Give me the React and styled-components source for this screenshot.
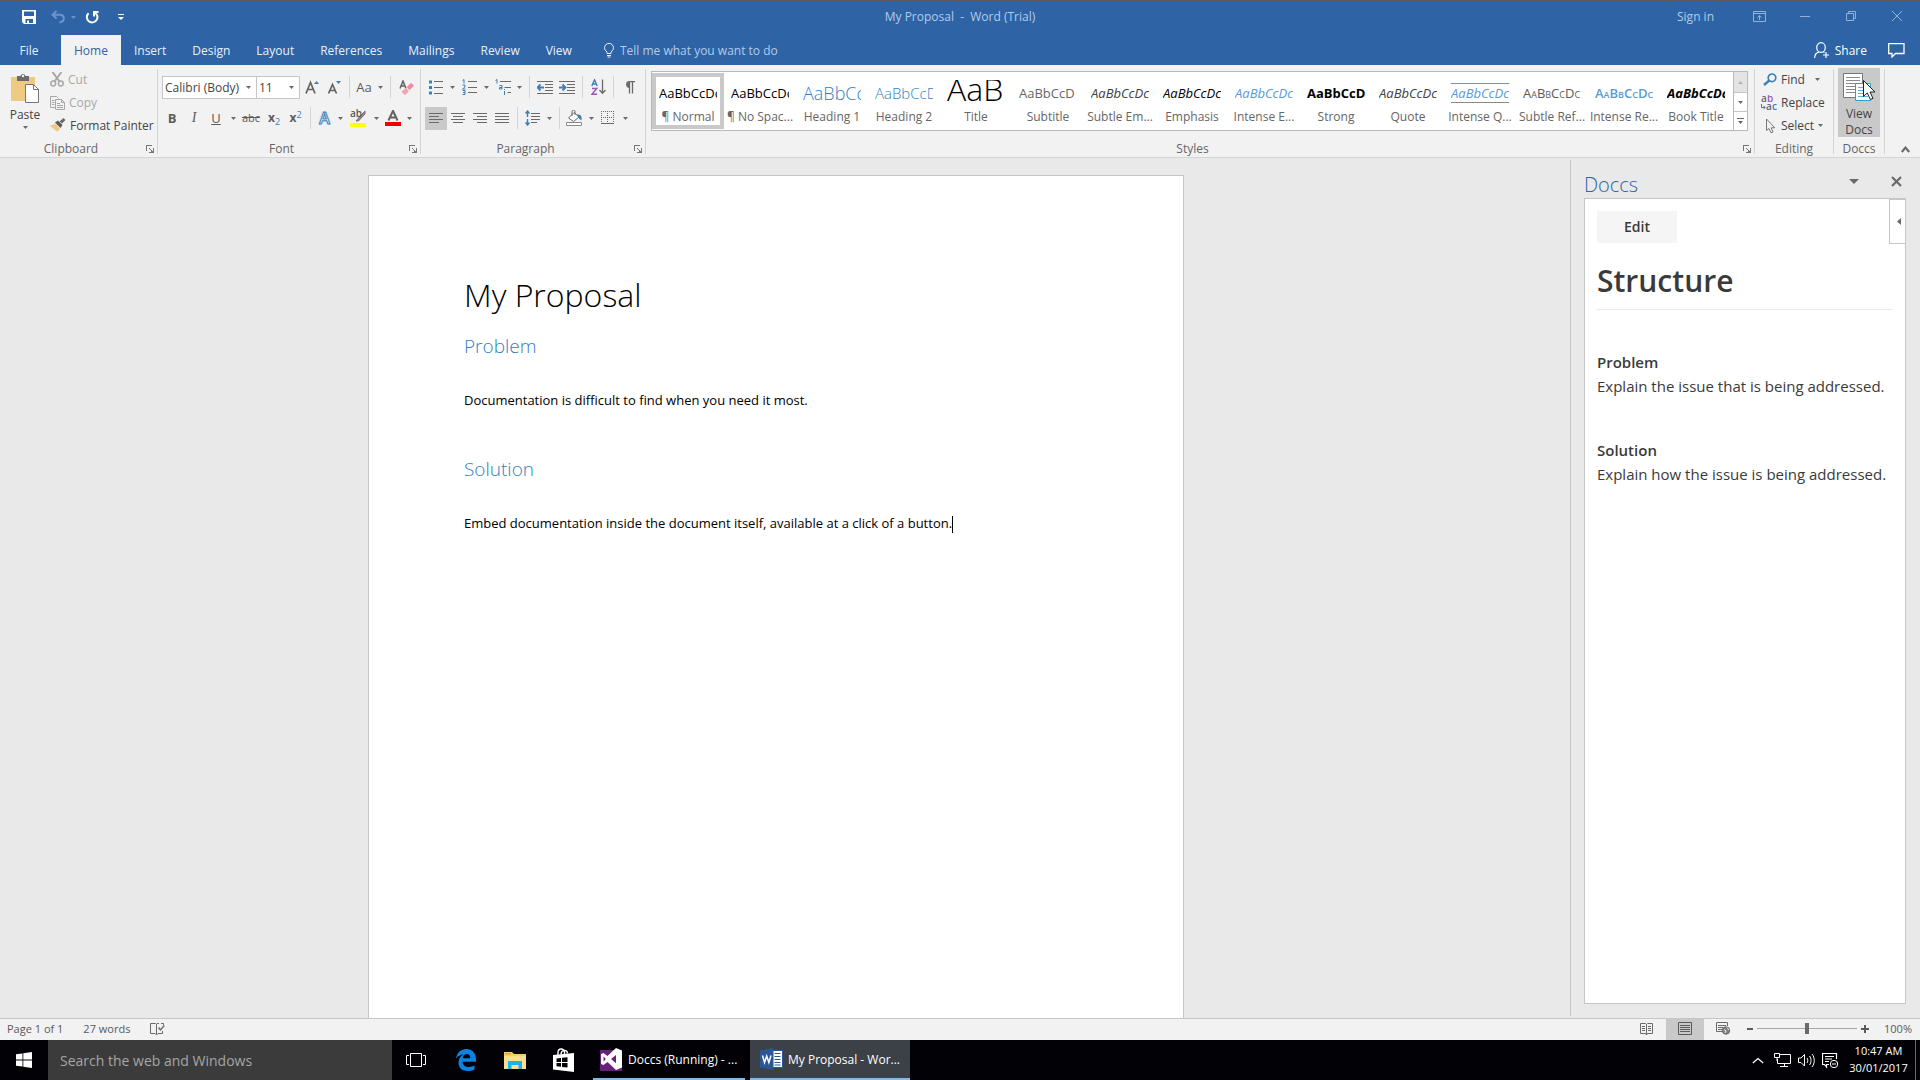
import styled, { createGlobalStyle, css } from 'styled-components';

const colors = {
  word: '#2e63a6',
  ribbon: '#f2f2f2',
  canvas: '#e9e9e9',
  line: '#d4d4d4',
  frame: '#c6c6c6',
  text: '#444444',
  muted: '#666666',
  disabled: '#a8a8a8',
  icon: '#6a6a6a',
  accent: '#3f7fb8',
  heading: '#2f7fc3',
  light: '#5b9bd5',
  titleText: '#b4cbe8',
  active: '#c9c9c9',
};

const ui = "'Open Sans', 'Noto Sans', sans-serif";

const GlobalStyle = createGlobalStyle`
  * {
    box-sizing: border-box;
  }

  body {
    margin: 0;
    font-family: ${ui};
    font-size: 12px;
    color: ${colors.text};
  }

  button, input, select {
    font: inherit;
    color: inherit;
    margin: 0;
    padding: 0;
    border: 0;
    background: none;
    border-radius: 0;
  }

  h1, h2, h3, p {
    margin: 0;
  }

  svg {
    display: block;
    flex: none;
  }
`;

const Window = styled.div`
  display: flex;
  flex-direction: column;
  height: 100vh;
  min-height: 600px;
  overflow: hidden;
  background: ${colors.canvas};
`;

/* ---------- title bar and tabs ---------- */

const TitleBar = styled.header`
  display: grid;
  grid-template-columns: 1fr auto 1fr;
  align-items: center;
  height: 35px;
  flex: none;
  border-top: 1px solid #5d5d5d;
  background: ${colors.word};
  color: ${colors.titleText};
  padding-bottom: 2px;
`;

const QuickAccess = styled.div`
  display: flex;
  align-items: center;
  padding-left: 14px;
`;

const QuickButton = styled.button`
  display: flex;
  align-items: center;
  justify-content: center;
  width: ${(p) => p.$w || 26}px;
  height: 26px;
`;

const WindowTitle = styled.h1`
  font-size: 12px;
  font-weight: 400;
  white-space: pre;
  padding-bottom: 2px;
`;

const WindowControls = styled.div`
  display: flex;
  align-items: center;
  justify-content: flex-end;
  padding-bottom: 2px;
`;

const SignIn = styled.button`
  padding: 0 22px;
`;

const WindowButton = styled.button`
  display: flex;
  align-items: center;
  justify-content: center;
  width: 46px;
  height: 28px;
  opacity: 0.75;
`;

const TabBar = styled.nav`
  display: flex;
  align-items: stretch;
  height: 30px;
  flex: none;
  background: ${colors.word};
  color: #e8effa;
`;

const Tab = styled.button`
  padding: 0 13px;
  ${(p) =>
    p.$active &&
    css`
      background: ${colors.ribbon};
      color: ${colors.word};
    `}
`;

const FileTab = styled(Tab)`
  width: 58px;
  margin-right: 3px;
`;

const TellMe = styled.label`
  display: flex;
  align-items: center;
  gap: 6px;
  flex: 1;
  margin-left: 19px;

  input {
    flex: 1;
    min-width: 0;
    outline: 0;
  }

  input::placeholder {
    color: ${colors.titleText};
    opacity: 1;
  }
`;

const TabAction = styled.button`
  display: flex;
  align-items: center;
  gap: 5px;
  padding: 0 15px 0 6px;
  color: #ffffff;
`;

/* ---------- ribbon ---------- */

const Ribbon = styled.section`
  display: flex;
  height: 93px;
  flex: none;
  background: ${colors.ribbon};
  border-bottom: 1px solid ${colors.line};
  padding: 4px 0 3px;
`;

const Group = styled.div`
  display: flex;
  flex-direction: column;
  justify-content: space-between;
  min-width: 0;
  flex: ${(p) => (p.$grow ? '1 1 0' : 'none')};
  width: ${(p) => (p.$w ? `${p.$w}px` : 'auto')};
  border-right: 1px solid ${colors.line};
`;

const GroupFooter = styled.div`
  display: flex;
  align-items: center;
  height: 14px;
  margin-bottom: -2px;
  color: ${colors.muted};
`;

const GroupName = styled.span`
  flex: 1;
  text-align: center;
  line-height: 14px;
`;

const Launcher = styled.button`
  display: flex;
  justify-content: flex-end;
  width: 12px;
  margin-right: 3px;
`;

const ClipboardTools = styled.div`
  display: flex;
`;

const PasteButton = styled.button`
  display: flex;
  flex-direction: column;
  align-items: center;
  width: 50px;
  height: 64px;
  padding-top: 4px;
  gap: 3px;
  line-height: 16px;
`;

const Stack = styled.div`
  display: flex;
  flex-direction: column;
  margin-top: -1px;
`;

const LineButton = styled.button`
  display: flex;
  align-items: center;
  gap: 4px;
  height: 23px;
  padding-left: ${(p) => p.$pad || 0}px;
  color: ${(p) => (p.$off ? colors.disabled : colors.text)};
  white-space: nowrap;
`;

const ToolRows = styled.div`
  display: flex;
  flex-direction: column;
  gap: 7px;
  padding: 6px 0 0 ${(p) => p.$left || 4}px;
`;

const ToolRow = styled.div`
  display: flex;
  align-items: center;
  height: 24px;
`;

const ToolButton = styled.button`
  display: flex;
  align-items: center;
  width: ${(p) => p.$w || 22}px;
  height: 23px;
  color: #5c5c5c;
  background: ${(p) => (p.$active ? colors.active : 'transparent')};
`;

const ToolFace = styled.span`
  display: flex;
  flex: 1;
  justify-content: center;
  white-space: nowrap;
`;

const CaretBox = styled.span`
  display: flex;
  justify-content: center;
  width: ${(p) => p.$w || 12}px;
`;

const Divider = styled.span`
  width: 1px;
  height: 22px;
  margin: 0 4px;
  background: ${colors.line};
`;

const Glyph = styled.span`
  font-size: ${(p) => p.$size || 14}px;
  line-height: 16px;
  font-weight: ${(p) => (p.$bold ? 700 : 400)};
  font-style: ${(p) => (p.$italic ? 'italic' : 'normal')};
  font-family: ${(p) => (p.$serif ? "'Liberation Serif', serif" : ui)};
  text-decoration: ${(p) => p.$line || 'none'};
`;

const Script = styled.span`
  align-self: ${(p) => (p.$up ? 'flex-start' : 'flex-end')};
  font-size: 9px;
  line-height: 9px;
  color: ${colors.accent};
`;

const OutlineLetter = styled.span`
  font-size: 16px;
  line-height: 18px;
  font-weight: 600;
  color: #ffffff;
  -webkit-text-stroke: 1px ${colors.accent};
  text-shadow: 0 0 3px #a9cdee;
`;

const Field = styled.label`
  position: relative;
  width: ${(p) => p.$w}px;
  height: 23px;
  margin: ${(p) => p.$margin};
  border: 1px solid ${colors.frame};
  background: #ffffff;

  select {
    width: 100%;
    height: 21px;
    padding-left: 2px;
    appearance: none;
    outline: 0;
  }

  svg {
    position: absolute;
    right: 5px;
    top: 9px;
    pointer-events: none;
  }
`;

const Gallery = styled.div`
  display: flex;
  height: 60px;
  margin: 2px 6px 0 5px;
  border: 1px solid #b5babd;
  background: #ffffff;
`;

const GalleryItems = styled.div`
  display: flex;
  flex: 1;
  min-width: 0;
  overflow: hidden;
`;

const StyleCard = styled.button`
  display: flex;
  flex-direction: column;
  align-items: stretch;
  flex: none;
  width: 72px;
  height: 56px;
  margin-top: 1px;
  padding: 3px 3px 0;
  border: 4px solid ${(p) => (p.$active ? colors.active : 'transparent')};
  line-height: 16px;
`;

const Preview = styled.span`
  display: flex;
  align-items: center;
  flex: none;
  height: 26px;
  padding-bottom: ${(p) => p.$lift || 0}px;
  overflow: hidden;
  white-space: nowrap;
  text-align: left;
  font-size: ${(p) => p.$size || 13}px;
  line-height: 20px;
  color: ${(p) => p.$color || '#000000'};
  font-weight: ${(p) => p.$weight || 400};
  font-style: ${(p) => (p.$italic ? 'italic' : 'normal')};
  font-variant: ${(p) => (p.$caps ? 'small-caps' : 'normal')};
`;

const QuoteRule = styled.span`
  border-top: 1px solid ${colors.light};
  border-bottom: 1px solid #8a8a8a;
  line-height: 18px;
`;

const StyleName = styled.span`
  display: flex;
  justify-content: center;
  margin: 3px -3px 0;
  color: ${colors.muted};
  white-space: nowrap;
`;

const GalleryScroll = styled.div`
  display: grid;
  grid-template-rows: 21px 19px 1fr;
  width: 14px;
  border-left: 1px solid #b5babd;
`;

const ScrollButton = styled.button`
  display: flex;
  align-items: center;
  justify-content: center;
  border-bottom: ${(p) => (p.$last ? '0' : `1px solid ${colors.frame}`)};
  background: ${(p) => (p.$off ? '#e4e4e4' : '#ffffff')};
`;

const ViewDocs = styled.button`
  display: flex;
  flex-direction: column;
  align-items: center;
  gap: 3px;
  width: 42px;
  height: 69px;
  margin: -1px auto 0;
  padding-top: 5px;
  line-height: 16px;
  background: ${colors.active};
`;

const CollapseRibbon = styled.button`
  display: flex;
  align-items: flex-end;
  justify-content: center;
  flex: none;
  width: 35px;
  padding: 0 0 1px 5px;
`;

/* ---------- document and side pane ---------- */

const Workspace = styled.div`
  display: flex;
  flex: 1;
  min-height: 0;
`;

const Canvas = styled.main`
  display: flex;
  justify-content: center;
  flex: 1;
  min-width: 0;
  overflow: hidden;
  padding: 17px 18px 0 0;
`;

const Page = styled.article`
  width: 816px;
  border: 1px solid ${colors.frame};
  border-bottom: 0;
  background: #ffffff;
  padding: 95px;
  color: #000000;
`;

const DocTitle = styled.h1`
  font-size: 32px;
  line-height: 48px;
  font-weight: 300;
`;

const DocHeading = styled.h2`
  font-size: 19px;
  line-height: 24px;
  font-weight: 300;
  color: ${colors.heading};
  margin: ${(p) => (p.$first ? 15 : 45)}px 0 30px;
`;

const DocText = styled.p`
  font-size: 13px;
  line-height: 24px;
`;

const TextCursor = styled.span`
  display: inline-block;
  width: 1px;
  height: 17px;
  vertical-align: middle;
  background: #000000;
`;

const Pane = styled.aside`
  display: flex;
  flex-direction: column;
  width: 350px;
  flex: none;
  margin: 2px 0;
  padding: 14px 14px 12px 13px;
  border-left: 1px solid ${colors.frame};
`;

const PaneHeader = styled.div`
  display: flex;
  align-items: center;
  height: 24px;
  padding-bottom: 2px;
`;

const PaneTitle = styled.h2`
  flex: 1;
  font-size: 20px;
  line-height: 22px;
  font-weight: 300;
  color: ${colors.word};
`;

const PaneButton = styled.button`
  display: flex;
  align-items: center;
  justify-content: center;
  width: 42px;
  height: 20px;
  margin: -8px -11px 0 11px;
`;

const PaneBody = styled.div`
  position: relative;
  flex: 1;
  padding: 12px;
  border: 1px solid ${colors.frame};
  background: #ffffff;
  color: #3a3a3a;
`;

const PaneHandle = styled.button`
  position: absolute;
  top: 0;
  right: -1px;
  display: flex;
  align-items: center;
  justify-content: center;
  width: 17px;
  height: 45px;
  padding-left: 3px;
  border: 1px solid ${colors.frame};
  background: #ffffff;
`;

const EditButton = styled.button`
  display: block;
  width: 80px;
  height: 32px;
  padding-bottom: 2px;
  background: #f5f5f5;
  font-size: 14px;
  font-weight: 600;
`;

const PaneHeading = styled.h2`
  font-size: 30px;
  line-height: 40px;
  font-weight: 600;
  margin-top: 18px;
  padding-bottom: 8px;
  border-bottom: 1px solid #eaeaea;
`;

const Hint = styled.section`
  margin-top: 40px;
  font-size: 15px;
  line-height: 24px;

  h3 {
    font-size: 15px;
    font-weight: 600;
  }
`;

/* ---------- status bar ---------- */

const StatusBar = styled.footer`
  display: flex;
  align-items: center;
  height: 22px;
  flex: none;
  border-top: 1px solid ${colors.frame};
  background: ${colors.ribbon};
  color: #5a5a5a;
  font-size: 11px;
  padding: 0 8px 2px 7px;
`;

const StatusText = styled.span`
  margin-right: 20px;
  line-height: 18px;
`;

const StatusSpacer = styled.span`
  flex: 1;
`;

const ViewButton = styled.button`
  display: flex;
  align-items: center;
  justify-content: center;
  width: 38px;
  height: 21px;
  margin-bottom: -2px;
  padding-bottom: 2px;
  background: ${(p) => (p.$active ? colors.active : 'transparent')};
`;

const ZoomButton = styled.button`
  display: flex;
  align-items: center;
  justify-content: center;
  width: ${(p) => p.$w}px;
  height: 18px;
`;

const ZoomSlider = styled.input`
  width: 100px;
  height: 12px;
  appearance: none;
  outline: 0;

  &::-webkit-slider-runnable-track {
    height: 1px;
    background: #a6a6a6;
  }

  &::-webkit-slider-thumb {
    appearance: none;
    width: 4px;
    height: 11px;
    margin-top: -5px;
    background: ${colors.icon};
  }
`;

const ZoomLevel = styled.button`
  width: 39px;
  text-align: right;
`;

/* ---------- taskbar ---------- */

const Taskbar = styled.footer`
  display: flex;
  align-items: stretch;
  height: 40px;
  flex: none;
  background: #020206;
  color: #ffffff;
`;

const TaskButton = styled.button`
  display: flex;
  align-items: center;
  justify-content: center;
  width: ${(p) => p.$w || 49}px;
`;

const TaskSearch = styled.input`
  width: 344px;
  padding: 0 12px;
  background: #3b3b3b;
  font-size: 14px;
  outline: 0;

  &::placeholder {
    color: #a6a6a6;
    opacity: 1;
  }
`;

const RunningApp = styled.button`
  display: flex;
  align-items: center;
  gap: 5px;
  width: ${(p) => p.$w}px;
  margin-left: 5px;
  padding-left: ${(p) => p.$pad}px;
  border-bottom: 2px solid #82b8e6;
  background: ${(p) => (p.$active ? '#3c4147' : 'transparent')};
  white-space: nowrap;
`;

const Tray = styled.div`
  display: flex;
  align-items: center;
  margin-left: auto;
`;

const TrayButton = styled.button`
  display: flex;
  justify-content: center;
  width: 24px;
`;

const Clock = styled.time`
  display: flex;
  flex-direction: column;
  align-items: center;
  width: 73px;
  padding-bottom: 2px;
  font-size: 11px;
  line-height: 17px;
`;

const ShowDesktop = styled.button`
  align-self: stretch;
  width: 5px;
  border-left: 1px solid #6a6a6a;
`;

/* ---------- icons ---------- */

function Icon({ w = 16, h = w, children, ...rest }) {
  return (
    <svg width={w} height={h} viewBox={`0 0 ${w} ${h}`} fill="none" aria-hidden="true" {...rest}>
      {children}
    </svg>
  );
}

const Caret = ({ color = '#6a6a6a', w = 5 }) => (
  <Icon w={w} h={3}>
    <path d={`M0 0H${w}L${w / 2} 3Z`} fill={color} />
  </Icon>
);

const LauncherIcon = () => (
  <Icon w={8} h={8} shapeRendering="crispEdges">
    <path d="M0.5 6V0.5H6" stroke="#777" />
    <path d="M3 3l3 3" stroke="#777" />
    <path d="M7.5 3v5M3 7.5h5M5 6h3" stroke="#777" />
  </Icon>
);

const SaveIcon = () => (
  <Icon w={14} h={14}>
    <path d="M0 0H14V14H2L0 12Z" fill="#fff" />
    <path d="M2 1.5H12V6H2Z" fill={colors.word} />
    <path d="M3.5 9H11V13H3.5Z" fill={colors.word} />
    <path d="M5 10.5H7V13H5Z" fill="#fff" />
  </Icon>
);

const UndoIcon = () => (
  <Icon w={14} h={14}>
    <path d="M5.5 1L1.5 4.8L5.5 8.6M1.5 4.8H8.5C14 4.8 14.500 11.500 8.500 12.500" stroke="#6d94c8" strokeWidth="2" />
  </Icon>
);

const RedoIcon = () => (
  <Icon w={14} h={14}>
    <path d="M9 2.200A5.300 5.300 0 1 1 3.600 3.200" stroke="#fff" strokeWidth="2" />
    <path d="M0.500 1H6V6.500H4V3H0.500Z" fill="#fff" transform="translate(14 0) scale(-1 1)" />
  </Icon>
);

const CustomizeIcon = () => (
  <Icon w={6} h={6}>
    <path d="M0 0.5H6" stroke="#fff" />
    <path d="M0 3H6L3 6Z" fill="#fff" />
  </Icon>
);

const RibbonOptionsIcon = () => (
  <Icon w={13} h={11} stroke={colors.titleText}>
    <path d="M0.5 0.5H12.500V10.500H0.500ZM0.500 2.500H12.500M6.500 9V4.500M4.500 6.500L6.500 4.500L8.500 6.500" />
  </Icon>
);

const MinimizeIcon = () => (
  <Icon w={10} h={10} stroke={colors.titleText}>
    <path d="M0 5.5H10" />
  </Icon>
);

const RestoreIcon = () => (
  <Icon w={10} h={10} stroke={colors.titleText}>
    <path d="M0.5 2.500H7.500V9.500H0.500ZM2.500 2.500V0.500H9.500V7.500H7.500" />
  </Icon>
);

const CloseIcon = () => (
  <Icon w={10} h={10} stroke={colors.titleText}>
    <path d="M0 0L10 10M10 0L0 10" />
  </Icon>
);

const BulbIcon = () => (
  <Icon w={10} h={15} stroke="#e8effa">
    <path d="M3 10.500V9C1.500 7.500 0.500 6.500 0.500 4.800A4.400 4.300 0 0 1 9.500 4.800C9.500 6.500 8.500 7.500 7 9V10.500ZM3 12.500H7M3.500 14H6.500" />
  </Icon>
);

const PersonIcon = () => (
  <Icon w={16} h={17} stroke="#fff" strokeWidth="1.2">
    <ellipse cx="7" cy="5.500" rx="4.300" ry="4.800" />
    <path d="M0.600 16C0.800 12.500 2.500 10.500 5 9.800M9 9.800L10.500 10.500M12 10V16M9 13H15" />
  </Icon>
);

const CommentIcon = () => (
  <Icon w={17} h={15} stroke="#fff" strokeWidth="1.3">
    <path d="M0.700 0.700H16V10.500H7.500L4 14V10.500H0.700Z" />
  </Icon>
);

const PasteIcon = () => (
  <Icon w={30} h={31}>
    <path d="M1 4H25V28H1Z" fill="#efca83" />
    <path d="M7 3H10.500A2.600 2.600 0 0 1 15.500 3H19V8H7Z" fill="#6b6b6b" />
    <circle cx="13" cy="3" r="1.200" fill="#f2f2f2" />
    <path d="M15.500 11.500H23.500L28.500 16.500V29.500H15.500Z" fill="#fff" stroke="#777" />
    <path d="M23.500 11.500V16.500H28.500" stroke="#777" />
  </Icon>
);

const CutIcon = () => (
  <Icon w={14} h={15} stroke="#a8a8a8" strokeWidth="1.500">
    <path d="M2.500 0L9.500 9.500M11.500 0L4.500 9.500" strokeWidth="2" />
    <circle cx="3.200" cy="11.500" r="2.400" />
    <circle cx="10.800" cy="11.500" r="2.400" />
  </Icon>
);

const CopyIcon = () => (
  <Icon w={15} h={14} stroke="#a8a8a8">
    <path d="M5 11.500H0.500V0.500H6.500L8.500 2.500M2 4.500H4.500M2 6.500H4.500M2 8.500H4.500" />
    <path d="M5.500 3.500H11.500L14.500 6.500V13.500H5.500ZM11.500 3.500V6.500H14.500M7 7.500H10M7 9.500H13M7 11.500H13" />
  </Icon>
);

const PainterIcon = () => (
  <Icon w={16} h={15}>
    <path d="M0 8L5.500 5.500L10 10.500L7.500 14Z" fill="#efca83" />
    <path d="M5 4.500L8 2.500L12.500 7L10.500 10Z" fill="#5a5a5a" />
    <path d="M9.500 3.500L13.500 0L15.500 2L12 5.500Z" fill="#6b6b6b" />
  </Icon>
);

const GrowFontIcon = ({ shrink }) => (
  <Icon w={14} h={15}>
    <path
      d={shrink ? 'M1.500 13.500L5.500 4.500L9.500 13.500M3 10.500H8' : 'M1 13.500L5.500 2.500L10 13.500M2.800 9.500H8.400'}
      stroke="#636363"
      strokeWidth="1.700"
    />
    <path d={shrink ? 'M9 1H14L11.500 4Z' : 'M9 4H14L11.500 1Z'} fill={colors.accent} />
  </Icon>
);

const EraserIcon = () => (
  <Icon w={15} h={15}>
    <path d="M1 8.500L4 1L7 8.500M2 6H6" stroke="#636363" strokeWidth="1.500" />
    <path d="M7.800 7L12 2.800L15 5.800L10.500 10.300Z" fill="#ec8da0" />
    <path d="M7 7.800L9.800 11.200L7 14.500H5L2.500 11.800Z" fill="#f1a5b3" />
  </Icon>
);

const HighlightIcon = () => (
  <Icon w={16} h={18}>
    <path d="M15 2L8.500 9L6 12H8.500L15 5Z" fill="#8a8a8a" stroke="#777" />
    <text x="0" y="8" fontSize="10" fontWeight="600" fill="#555" fontFamily="Open Sans">ab</text>
    <path d="M0 14H16V18H0Z" fill="#ffff00" />
  </Icon>
);

const FontColorIcon = () => (
  <Icon w={16} h={16}>
    <path d="M3.500 10.500L8 0.800L12.500 10.500M5.300 7.500H10.700" stroke="#636363" strokeWidth="2" />
    <path d="M0 12H16V16H0Z" fill="#ee0000" />
  </Icon>
);

const BulletsIcon = () => (
  <Icon w={14} h={15}>
    <path d="M0 0.500H3V3.500H0ZM0 6H3V9H0ZM0 11.500H3V14.500H0Z" fill={colors.accent} />
    <path d="M5 1.500H14M5 7.500H14M5 13.500H14" stroke="#6a6a6a" />
  </Icon>
);

const NumberingIcon = () => (
  <Icon w={15} h={16}>
    <path d="M0.500 1.500L2 0.500V4.500M0.500 6H3V8L0.500 10H3.500M0.500 11.500H3V15.500H0.500M1 13.500H3" stroke={colors.accent} />
    <path d="M6 2.500H15M6 8.500H15M6 13.500H15" stroke="#6a6a6a" />
  </Icon>
);

const MultilevelIcon = () => (
  <Icon w={16} h={16}>
    <path d="M0.500 1.500L2 0.500V4.500M4.500 6.500H7V10H4.500V8.500H7M9.500 10V11M9.500 12V16" stroke={colors.accent} />
    <path d="M5 2.500H16M9.500 8.500H16M12.500 13.500H16" stroke="#6a6a6a" />
  </Icon>
);

const IndentIcon = ({ right }) => (
  <Icon w={16} h={13}>
    <path d="M0 0.500H16M8 3.500H16M8 6.500H16M8 9.500H16M0 12.500H16" stroke="#6a6a6a" />
    <path
      d={right ? 'M0 6.500H6M3.500 3.500L6.500 6.500L3.500 9.500' : 'M7 6.500H1M3.500 3.500L0.500 6.500L3.500 9.500'}
      stroke={colors.accent}
      strokeWidth="1.800"
    />
  </Icon>
);

const SortIcon = () => (
  <Icon w={15} h={16}>
    <path d="M0.800 7L3.500 0.800L6.200 7M1.500 5H5.500" stroke={colors.accent} strokeWidth="1.400" />
    <path d="M1 9.500H5.800L1 15.200H6.200" stroke="#9b59b6" strokeWidth="1.400" />
    <path d="M11.500 0.500V14M8.500 11L11.500 14.300L14.500 11" stroke="#6a6a6a" strokeWidth="1.300" />
  </Icon>
);

const PilcrowIcon = () => (
  <Icon w={11} h={13}>
    <path d="M5 0.500H11M5.500 0.500V12.500M8.500 0.500V12.500" stroke="#6a6a6a" strokeWidth="1.300" />
    <path d="M5.500 0A3.300 3.300 0 0 0 5.500 6.800Z" fill="#6a6a6a" />
  </Icon>
);

const alignments = {
  left: 'M0 0.500H14M0 3.500H10M0 6.500H14M0 9.500H10',
  center: 'M0 0.500H14M2 3.500H12M0 6.500H14M2 9.500H12',
  right: 'M0 0.500H14M4 3.500H14M0 6.500H14M4 9.500H14',
  justify: 'M0 0.500H14M0 3.500H14M0 6.500H14M0 9.500H14',
};

const AlignIcon = ({ side }) => (
  <Icon w={14} h={10}>
    <path d={alignments[side]} stroke="#6a6a6a" />
  </Icon>
);

const SpacingIcon = () => (
  <Icon w={15} h={16}>
    <path d="M2.500 1V7M2.500 9V15M0.500 3.500L2.500 1L4.500 3.500M0.500 12.500L2.500 15L4.500 12.500" stroke={colors.accent} strokeWidth="1.400" />
    <path d="M6 3.500H15M6 6.500H15M6 9.500H15M6 12.500H12" stroke="#6a6a6a" />
  </Icon>
);

const BucketIcon = () => (
  <Icon w={17} h={16}>
    <path d="M2.500 8L8 2.500L13 7L7.500 11.500Z" fill="#fff" stroke="#6a6a6a" />
    <path d="M6 6V1.500A1.500 1.500 0 0 1 9 1.500V5" stroke="#6a6a6a" />
    <path d="M11 4.500C15 4.500 16 6 15.500 10.500L12.500 8Z" fill={colors.accent} />
    <path d="M0.500 12.500H15.500V15.500H0.500Z" fill="#fff" stroke="#8a8a8a" />
  </Icon>
);

const BordersIcon = () => (
  <Icon w={14} h={14} stroke="#6a6a6a">
    <path d="M0 0.500H13M0 6.500H13M0.500 0V12M6.500 0V12M12.500 0V12" strokeDasharray="1 1" />
    <path d="M0 12.500H13" />
  </Icon>
);

const FindIcon = () => (
  <Icon w={14} h={13}>
    <circle cx="9" cy="4.800" r="3.800" stroke={colors.accent} strokeWidth="1.700" />
    <path d="M6.300 7.500L1 12" stroke={colors.accent} strokeWidth="2.400" />
  </Icon>
);

const ReplaceIcon = () => (
  <Icon w={16} h={16}>
    <text x="0" y="7" fontSize="10" fontWeight="600" fill="#666" fontFamily="Open Sans">a</text>
    <text x="6" y="7" fontSize="10" fontWeight="600" fill="#9b59b6" fontFamily="Open Sans">b</text>
    <text x="5" y="15" fontSize="10" fontWeight="600" fill="#666" fontFamily="Open Sans">a</text>
    <text x="11" y="15" fontSize="10" fontWeight="600" fill={colors.accent} fontFamily="Open Sans">c</text>
    <path d="M0.500 9V12.500H4M2.500 10.800L4.200 12.500L2.500 14.200" stroke={colors.accent} />
  </Icon>
);

const SelectIcon = () => (
  <Icon w={12} h={16}>
    <path d="M1.500 1V12.500L4 10.500L6 14.800L8 14L6.200 9.800H9.800Z" stroke="#777" />
  </Icon>
);

const ViewDocsIcon = () => (
  <Icon w={34} h={30}>
    <path d="M1.500 0.500H20.500V24.500H1.500Z" fill="#fff" stroke="#777" />
    <path d="M4 4.500H18M4 7.500H18M4 10.500H18M4 13.500H18M4 16.500H18M4 19.500H13" stroke="#8a8a8a" />
    <path d="M13.500 10.500H28.500V27.500H13.500Z" fill="#fff" stroke="#2a9fd8" />
    <path d="M16 14.500H24M16 17.500H24M16 20.500H26M16 23.500H26" stroke="#5bb5e0" />
    <path d="M21.500 7.500V23.500L25.300 20L28.300 26.500L31 25.300L28 19H33Z" fill="#fff" stroke="#222" />
  </Icon>
);

const ChevronUp = ({ color = '#666', w = 9, thick = 2 }) => (
  <Icon w={w} h={7}>
    <path d={`M0.800 6L${w / 2} 1.500L${w - 0.8} 6`} stroke={color} strokeWidth={thick} />
  </Icon>
);

const ProofIcon = () => (
  <Icon w={15} h={14} stroke="#6a6a6a">
    <path d="M9 1.500H7L6.500 2.500L5.500 1.500H0.500V11.500H5L6.500 13L8 11.500H12.500V9M6.500 2.500V12.500M11 1.500H13.500V3" />
    <path d="M8.500 5.500L10.500 8L14.300 3.500" strokeWidth="1.400" />
  </Icon>
);

const ReadIcon = () => (
  <Icon w={14} h={14} stroke="#6a6a6a">
    <path d="M0.500 1.500H5.500L6.500 2.500L7.500 1.500H12.500V11.500H7.500L6.500 13L5.500 11.500H0.500ZM6.500 2V13" />
    <path d="M2 4.500H5M2 6.500H5M2 8.500H5M8 4.500H11M8 6.500H11M8 8.500H11" />
  </Icon>
);

const PrintIcon = () => (
  <Icon w={14} h={13} stroke="#5a5a5a">
    <path d="M0.500 0.500H13.500V12.500H0.500ZM2 3.500H12M2 5.500H12M2 7.500H12M2 9.500H12" />
  </Icon>
);

const WebIcon = () => (
  <Icon w={15} h={13} stroke="#6a6a6a">
    <path d="M6 9.500H0.500V0.500H11.500V4M2 3.500H10M2 5.500H7M2 7.500H6" />
    <circle cx="10" cy="8.500" r="3.700" fill="#808080" />
    <path d="M8 7.500L10 9L9 11M11 5.500L13 8" stroke="#f2f2f2" />
  </Icon>
);

const WindowsLogo = () => (
  <Icon w={17} h={16}>
    <path fill="#fff" d="M0 2.300L6.500 1.400V7.500H0ZM7.300 1.300L16 0V7.500H7.300ZM0 8.500H6.500V14.600L0 13.700ZM7.300 8.500H16V16L7.300 14.700Z" />
  </Icon>
);

const TaskViewIcon = () => (
  <Icon w={21} h={15} stroke="#fff">
    <path d="M4.500 0.500H15.500V13.500H4.500ZM3 2.500H0.500V11.500H3M17 2.500H19.500V11.500H17" />
  </Icon>
);

const EdgeIcon = () => (
  <Icon w={20} h={22}>
    <path
      fill="#0a84e0"
      d="M0 9.500C1 3.500 5 0 10.200 0C16.500 0 20 4.500 20 10V12.800H6.500C6.700 16.500 9.500 18 12.800 18C15 18 17 17.300 18.500 16.300V20.500C16.500 21.500 14.300 22 11.800 22C6 22 2.500 18.500 2.500 13.500C2.500 9.800 4.500 7 7.500 5.500C4.500 5.700 1.800 7 0 9.500ZM6.800 9.200H14.300C14.300 6.500 13 5 10.800 5C8.500 5 7 6.800 6.800 9.200Z"
    />
  </Icon>
);

const FolderIcon = () => (
  <Icon w={22} h={19}>
    <path d="M0 1H8L10 3H22V18H0Z" fill="#f3cf6b" />
    <path d="M1 2H7V3.500H1Z" fill="#d9a93c" />
    <path d="M0 5H22V18H0Z" fill="#fadf8e" />
    <path d="M4 10H18V18H14.500V14H7.500V18H4Z" fill="#19b5ea" />
  </Icon>
);

const StoreIcon = () => (
  <Icon w={21} h={24}>
    <path d="M0 7L21 5V24L0 21.500Z" fill="#fff" />
    <path d="M5 7V4.500C5 0 11.500 0 11.500 4V6.500M8 6.500C8 2 14 0.500 14.500 5.500" stroke="#fff" strokeWidth="1.400" />
    <path d="M3.500 10.500L8 10V14H3.500ZM9 9.800L14.500 9.300V14H9ZM3.500 15H8V18.800L3.500 18.300ZM9 15H14.500V19.500L9 19Z" fill="#020206" />
  </Icon>
);

const VisualStudioIcon = () => (
  <Icon w={23} h={23}>
    <path d="M0 2H22V23H0Z" fill="#68217a" />
    <path d="M16 0L22 2.500V19.500L16 22L7.500 14L3.500 17L1 16V6L3.500 5L7.500 8ZM16 7L11 11L16 15.200ZM3.500 8.500V13.500L5.800 11Z" fill="#fff" fillRule="evenodd" />
  </Icon>
);

const WordIcon = () => (
  <Icon w={23} h={22}>
    <path d="M12 2.500H22.500V19.500H12Z" fill="#fff" stroke="#2b579a" />
    <path d="M14.500 5.500H20.500M14.500 8.500H20.500M14.500 11.500H20.500M14.500 14.500H20.500M14.500 17H20.500" stroke="#2b579a" />
    <path d="M0 2.500L13.500 0V22L0 19.500Z" fill="#2b579a" />
    <path d="M2.500 7.500L4.500 14.500L6.700 8L8.900 14.500L11 7.500" stroke="#fff" strokeWidth="1.500" />
  </Icon>
);

const NetworkIcon = () => (
  <Icon w={17} h={15} stroke="#fff">
    <path d="M5 1.500H16.500V10.500H3.500V6M10.500 10.500V13M6 13.500H14M0.500 0.500H5.500V4.500H0.500ZM3 5V8" />
  </Icon>
);

const VolumeIcon = () => (
  <Icon w={17} h={15} stroke="#fff">
    <path d="M0.500 5H3L6.500 1.500V13L3 9.500H0.500ZM9 5C10 6.500 10 8.500 9 10M11.500 3C13.500 5.500 13.500 9.500 11.500 12M14 1C17 4.500 17 10.500 14 14" />
  </Icon>
);

const ActionIcon = () => (
  <Icon w={17} h={17} stroke="#fff">
    <path d="M7 12.500H4.500V15L2.500 12.500H0.500V1.500H14.500V7M3 4.500H12M3 7H10M3 9.500H7" strokeWidth="1.200" />
    <circle cx="12" cy="12" r="3.700" fill="#020206" />
    <path d="M10 12H14" />
  </Icon>
);

/* ---------- data ---------- */

const tabs = ['Insert', 'Design', 'Layout', 'References', 'Mailings', 'Review', 'View'];

const gallery = [
  { name: '¶ Normal' },
  { name: '¶ No Spac...' },
  { name: 'Heading 1', size: 18, weight: 300, color: colors.heading, sample: 'AaBbCc' },
  { name: 'Heading 2', size: 15, weight: 300, color: colors.heading, sample: 'AaBbCcD' },
  { name: 'Title', size: 32, weight: 300, sample: 'AaB', lift: 8 },
  { name: 'Subtitle', color: '#666666', sample: 'AaBbCcD' },
  { name: 'Subtle Em...', italic: true, color: '#404040' },
  { name: 'Emphasis', italic: true },
  { name: 'Intense E...', italic: true, color: colors.light },
  { name: 'Strong', weight: 700 },
  { name: 'Quote', italic: true, color: '#404040' },
  { name: 'Intense Q...', italic: true, color: colors.light, rule: true },
  { name: 'Subtle Ref...', caps: true, color: '#5a5a5a' },
  { name: 'Intense Re...', caps: true, weight: 600, color: colors.light },
  { name: 'Book Title', italic: true, weight: 700 },
];

function Tool({ label, w, active, caret, children }) {
  return (
    <ToolButton type="button" aria-label={label} $w={w} $active={active}>
      <ToolFace>{children}</ToolFace>
      {caret && (
        <CaretBox>
          <Caret />
        </CaretBox>
      )}
    </ToolButton>
  );
}

function Footer({ name, launcher }) {
  return (
    <GroupFooter>
      <GroupName>{name}</GroupName>
      {launcher && (
        <Launcher type="button" aria-label={`${name} settings`}>
          <LauncherIcon />
        </Launcher>
      )}
    </GroupFooter>
  );
}

function ClipboardGroup() {
  return (
    <Group $w={158}>
      <ClipboardTools>
        <PasteButton type="button">
          <PasteIcon />
          Paste
          <Caret />
        </PasteButton>
        <Stack>
          <LineButton type="button" $off><CutIcon />Cut</LineButton>
          <LineButton type="button" $off><CopyIcon />Copy</LineButton>
          <LineButton type="button"><PainterIcon />Format Painter</LineButton>
        </Stack>
      </ClipboardTools>
      <Footer name="Clipboard" launcher />
    </Group>
  );
}

function FontGroup() {
  return (
    <Group $w={263}>
      <ToolRows $left={3}>
        <ToolRow>
          <Field $w={95} $margin="0 0 0 1px">
            <select aria-label="Font"><option>Calibri (Body)</option></select>
            <Caret />
          </Field>
          <Field $w={44} $margin="0 1px 0 -1px">
            <select aria-label="Font size"><option>11</option></select>
            <Caret />
          </Field>
          <Tool label="Grow font"><GrowFontIcon /></Tool>
          <Tool label="Shrink font"><GrowFontIcon shrink /></Tool>
          <Divider />
          <Tool label="Change case" w={32} caret><Glyph $size={13}>Aa</Glyph></Tool>
          <Divider />
          <Tool label="Clear formatting"><EraserIcon /></Tool>
        </ToolRow>
        <ToolRow>
          <Tool label="Bold"><Glyph $bold $size={13}>B</Glyph></Tool>
          <Tool label="Italic"><Glyph $serif $italic>I</Glyph></Tool>
          <Tool label="Underline" w={34} caret><Glyph $line="underline" $size={13}>U</Glyph></Tool>
          <Tool label="Strikethrough" w={24}><Glyph $size={11} $line="line-through">abc</Glyph></Tool>
          <Tool label="Subscript"><Glyph $bold $size={12}>x</Glyph><Script>2</Script></Tool>
          <Tool label="Superscript" w={21}><Glyph $bold $size={12}>x</Glyph><Script $up>2</Script></Tool>
          <Divider />
          <Tool label="Text effects" w={31} caret><OutlineLetter>A</OutlineLetter></Tool>
          <Tool label="Highlight" w={36} caret><HighlightIcon /></Tool>
          <Tool label="Font color" w={33} caret><FontColorIcon /></Tool>
        </ToolRow>
      </ToolRows>
      <Footer name="Font" launcher />
    </Group>
  );
}

function ParagraphGroup() {
  return (
    <Group $w={225}>
      <ToolRows>
        <ToolRow>
          <Tool label="Bullets" w={33} caret><BulletsIcon /></Tool>
          <Tool label="Numbering" w={34} caret><NumberingIcon /></Tool>
          <Tool label="Multilevel list" w={33} caret><MultilevelIcon /></Tool>
          <Divider />
          <Tool label="Decrease indent"><IndentIcon /></Tool>
          <Tool label="Increase indent"><IndentIcon right /></Tool>
          <Divider />
          <Tool label="Sort"><SortIcon /></Tool>
          <Divider />
          <Tool label="Show marks"><PilcrowIcon /></Tool>
        </ToolRow>
        <ToolRow>
          <Tool label="Align left" active><AlignIcon side="left" /></Tool>
          <Tool label="Center"><AlignIcon side="center" /></Tool>
          <Tool label="Align right"><AlignIcon side="right" /></Tool>
          <Tool label="Justify"><AlignIcon side="justify" /></Tool>
          <Divider />
          <Tool label="Line spacing" w={33} caret><SpacingIcon /></Tool>
          <Divider />
          <Tool label="Shading" w={33} caret><BucketIcon /></Tool>
          <Tool label="Borders" w={34} caret><BordersIcon /></Tool>
        </ToolRow>
      </ToolRows>
      <Footer name="Paragraph" launcher />
    </Group>
  );
}

function StylesGroup() {
  return (
    <Group $grow>
      <Gallery>
        <GalleryItems>
          {gallery.map((s, i) => (
            <StyleCard key={s.name} type="button" $active={i === 0}>
              <Preview
                $size={s.size}
                $weight={s.weight}
                $color={s.color}
                $italic={s.italic}
                $caps={s.caps}
                $lift={s.lift}
              >
                {s.rule ? <QuoteRule>AaBbCcDc</QuoteRule> : s.sample || 'AaBbCcDc'}
              </Preview>
              <StyleName>{s.name}</StyleName>
            </StyleCard>
          ))}
        </GalleryItems>
        <GalleryScroll>
          <ScrollButton type="button" aria-label="Previous styles" $off>
            <Icon w={5} h={3}><path d="M0 3H5L2.500 0Z" fill="#b5b5b5" /></Icon>
          </ScrollButton>
          <ScrollButton type="button" aria-label="Next styles"><Caret /></ScrollButton>
          <ScrollButton type="button" aria-label="All styles" $last>
            <Icon w={7} h={7}><path d="M0 0H7V1H0ZM1 3H6L3.500 6Z" fill="#666" /></Icon>
          </ScrollButton>
        </GalleryScroll>
      </Gallery>
      <Footer name="Styles" launcher />
    </Group>
  );
}

function EditingGroup() {
  return (
    <Group $w={79}>
      <Stack>
        <LineButton type="button" $pad={8}><FindIcon />Find<CaretBox $w={18}><Caret /></CaretBox></LineButton>
        <LineButton type="button" $pad={6}><ReplaceIcon />Replace</LineButton>
        <LineButton type="button" $pad={10}><SelectIcon />Select<Caret /></LineButton>
      </Stack>
      <Footer name="Editing" />
    </Group>
  );
}

export default function App() {
  return (
    <Window>
      <GlobalStyle />
      <TitleBar>
        <QuickAccess>
          <QuickButton type="button" aria-label="Save" $w={30}><SaveIcon /></QuickButton>
          <QuickButton type="button" aria-label="Undo" $w={27}><UndoIcon /></QuickButton>
          <QuickButton type="button" aria-label="Undo list" $w={5}><Caret color="#6d94c8" /></QuickButton>
          <QuickButton type="button" aria-label="Redo" $w={32}><RedoIcon /></QuickButton>
          <QuickButton type="button" aria-label="Customize toolbar"><CustomizeIcon /></QuickButton>
        </QuickAccess>
        <WindowTitle>{'My Proposal  -  Word (Trial)'}</WindowTitle>
        <WindowControls>
          <SignIn type="button">Sign in</SignIn>
          <WindowButton type="button" aria-label="Ribbon options"><RibbonOptionsIcon /></WindowButton>
          <WindowButton type="button" aria-label="Minimize"><MinimizeIcon /></WindowButton>
          <WindowButton type="button" aria-label="Restore"><RestoreIcon /></WindowButton>
          <WindowButton type="button" aria-label="Close"><CloseIcon /></WindowButton>
        </WindowControls>
      </TitleBar>

      <TabBar>
        <FileTab type="button">File</FileTab>
        <Tab type="button" $active>Home</Tab>
        {tabs.map((t) => (
          <Tab key={t} type="button">{t}</Tab>
        ))}
        <TellMe>
          <BulbIcon />
          <input type="text" aria-label="Tell me" placeholder="Tell me what you want to do" />
        </TellMe>
        <TabAction type="button"><PersonIcon />Share</TabAction>
        <TabAction type="button" aria-label="Comments"><CommentIcon /></TabAction>
      </TabBar>

      <Ribbon>
        <ClipboardGroup />
        <FontGroup />
        <ParagraphGroup />
        <StylesGroup />
        <EditingGroup />
        <Group $w={51}>
          <ViewDocs type="button">
            <ViewDocsIcon />
            <span>View<br />Docs</span>
          </ViewDocs>
          <Footer name="Doccs" />
        </Group>
        <CollapseRibbon type="button" aria-label="Collapse ribbon"><ChevronUp /></CollapseRibbon>
      </Ribbon>

      <Workspace>
        <Canvas>
          <Page>
            <DocTitle>My Proposal</DocTitle>
            <DocHeading $first>Problem</DocHeading>
            <DocText>Documentation is difficult to find when you need it most.</DocText>
            <DocHeading>Solution</DocHeading>
            <DocText>
              Embed documentation inside the document itself, available at a click of a button.
              <TextCursor />
            </DocText>
          </Page>
        </Canvas>
        <Pane>
          <PaneHeader>
            <PaneTitle>Doccs</PaneTitle>
            <PaneButton type="button" aria-label="Pane options">
              <Icon w={10} h={5}><path d="M0 0H10L5 5Z" fill="#6a6a6a" /></Icon>
            </PaneButton>
            <PaneButton type="button" aria-label="Close pane">
              <Icon w={11} h={11}><path d="M1 1L10 10M10 1L1 10" stroke="#6a6a6a" strokeWidth="2.200" /></Icon>
            </PaneButton>
          </PaneHeader>
          <PaneBody>
            <PaneHandle type="button" aria-label="Expand menu">
              <Icon w={4} h={7}><path d="M4 0V7L0 3.500Z" fill="#6a6a6a" /></Icon>
            </PaneHandle>
            <EditButton type="button">Edit</EditButton>
            <PaneHeading>Structure</PaneHeading>
            <Hint>
              <h3>Problem</h3>
              <p>Explain the issue that is being addressed.</p>
            </Hint>
            <Hint>
              <h3>Solution</h3>
              <p>Explain how the issue is being addressed.</p>
            </Hint>
          </PaneBody>
        </Pane>
      </Workspace>

      <StatusBar>
        <StatusText>Page 1 of 1</StatusText>
        <StatusText>27 words</StatusText>
        <ProofIcon />
        <StatusSpacer />
        <ViewButton type="button" aria-label="Read mode"><ReadIcon /></ViewButton>
        <ViewButton type="button" aria-label="Print layout" $active><PrintIcon /></ViewButton>
        <ViewButton type="button" aria-label="Web layout"><WebIcon /></ViewButton>
        <ZoomButton type="button" aria-label="Zoom out" $w={15}>
          <Icon w={6} h={2}><path d="M0 1H6" stroke="#5a5a5a" strokeWidth="2" /></Icon>
        </ZoomButton>
        <ZoomSlider type="range" aria-label="Zoom" min="0" max="100" defaultValue="50" />
        <ZoomButton type="button" aria-label="Zoom in" $w={16}>
          <Icon w={8} h={8}><path d="M0 4H8M4 0V8" stroke="#5a5a5a" strokeWidth="2" /></Icon>
        </ZoomButton>
        <ZoomLevel type="button">100%</ZoomLevel>
      </StatusBar>

      <Taskbar>
        <TaskButton type="button" aria-label="Start" $w={48}><WindowsLogo /></TaskButton>
        <TaskSearch type="text" aria-label="Search" placeholder="Search the web and Windows" />
        <TaskButton type="button" aria-label="Task view"><TaskViewIcon /></TaskButton>
        <TaskButton type="button" aria-label="Edge"><EdgeIcon /></TaskButton>
        <TaskButton type="button" aria-label="File Explorer"><FolderIcon /></TaskButton>
        <TaskButton type="button" aria-label="Store"><StoreIcon /></TaskButton>
        <RunningApp type="button" $w={152} $pad={7}><VisualStudioIcon />Doccs (Running) - ...</RunningApp>
        <RunningApp type="button" $w={160} $pad={10} $active><WordIcon />My Proposal - Wor...</RunningApp>
        <Tray>
          <TrayButton type="button" aria-label="Hidden icons"><ChevronUp color="#fff" w={12} thick={1.3} /></TrayButton>
          <TrayButton type="button" aria-label="Network"><NetworkIcon /></TrayButton>
          <TrayButton type="button" aria-label="Volume"><VolumeIcon /></TrayButton>
          <TrayButton type="button" aria-label="Notifications"><ActionIcon /></TrayButton>
          <Clock>
            <span>10:47 AM</span>
            <span>30/01/2017</span>
          </Clock>
          <ShowDesktop type="button" aria-label="Show desktop" />
        </Tray>
      </Taskbar>
    </Window>
  );
}
